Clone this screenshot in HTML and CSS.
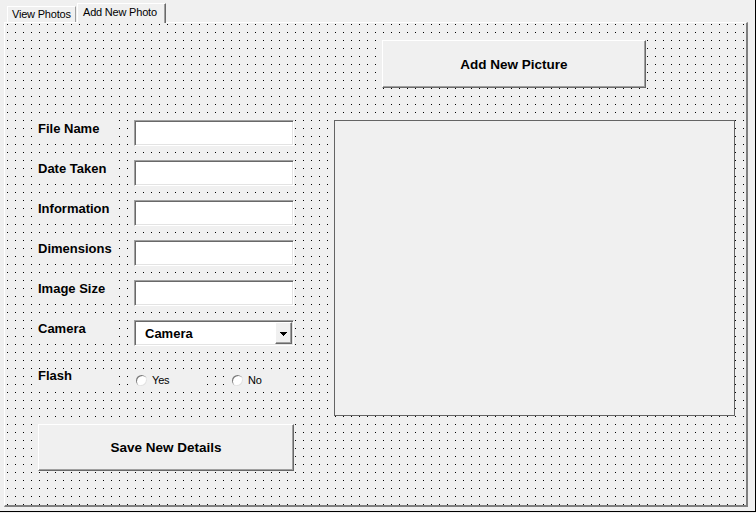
FILE: index.html
```html
<!DOCTYPE html>
<html>
<head>
<meta charset="utf-8">
<link rel="stylesheet" href="styles.css">
</head>
<body>
<div class="window">
  <div class="tabs">
    <div class="tab">View Photos</div>
    <div class="tab tab-active">Add New Photo</div>
  </div>
  <div class="page">
    <div class="top-row">
      <button class="btn btn-add">Add New Picture</button>
    </div>
    <div class="main">
      <div class="fields">
        <div class="row"><span class="label">File Name</span><span class="textbox"></span></div>
        <div class="row"><span class="label">Date Taken</span><span class="textbox"></span></div>
        <div class="row"><span class="label">Information</span><span class="textbox"></span></div>
        <div class="row"><span class="label">Dimensions</span><span class="textbox"></span></div>
        <div class="row"><span class="label">Image Size</span><span class="textbox"></span></div>
        <div class="row">
          <span class="label">Camera</span>
          <div class="combo">
            <span class="combo-text">Camera</span>
            <span class="combo-btn"><svg width="7" height="4" viewBox="0 0 7 4"><path d="M0 0h7v1H0z M1 1h5v1H1z M2 2h3v1H2z M3 3h1v1H3z" fill="#000"/></svg></span>
          </div>
        </div>
        <div class="row row-flash">
          <span class="label label-flash">Flash</span>
          <label class="option opt-yes"><span class="radio"></span>Yes</label>
          <label class="option opt-no"><span class="radio"></span>No</label>
        </div>
        <button class="btn btn-save">Save New Details</button>
      </div>
      <div class="image-frame"></div>
    </div>
  </div>
</div>
</body>
</html>
```
FILE: styles.css
```css
* { box-sizing: border-box; }
html, body { margin: 0; padding: 0; background: #f0f0f0; }
body {
  width: 756px;
  height: 513px;
  overflow: hidden;
  font-family: "Liberation Sans", Arial, sans-serif;
  color: #000;
}
.window {
  width: 756px;
  height: 512px;
  border-right: 1px solid #000;
  border-bottom: 1px solid #000;
}
.tabs {
  display: flex;
  align-items: flex-end;
  height: 22px;
  padding-left: 7px;
}
.tab {
  height: 16px;
  width: 69px;
  padding: 1px 0 0 4px;
  border-left: 1px solid #fff;
  border-top: 1px solid #fff;
  border-right: 1px solid #a0a0a0;
  font-size: 11px;
  line-height: 13px;
  letter-spacing: -0.2px;
  white-space: nowrap;
  background: #f0f0f0;
}
.tab-active {
  position: relative;
  z-index: 1;
  height: 20px;
  width: 89px;
  margin-left: 1px;
  margin-bottom: -1px;
  padding: 2px 0 0 5px;
  border-right: 1px solid #696969;
  box-shadow: inset -1px 0 0 #a0a0a0;
}
.page {
  margin-left: 4px;
  width: 744px;
  height: 485px;
  border-left: 1px solid #fff;
  border-top: 1px solid #fff;
  border-right: 2px solid #808080;
  border-bottom: 2px solid #808080;
  background-color: #f0f0f0;
  background-image: url("data:image/svg+xml,%3Csvg xmlns='http://www.w3.org/2000/svg' width='8' height='8' shape-rendering='crispEdges'%3E%3Crect width='1' height='1' fill='%23000'/%3E%3C/svg%3E");
  background-size: 8px 8px;
  background-position: 2px 1px;
}
.top-row {
  display: flex;
  padding: 17px 0 0 377px;
}
.btn {
  display: block;
  margin: 0;
  padding: 0;
  background: #f0f0f0;
  border-top: 1px solid #fff;
  border-left: 1px solid #fff;
  border-right: 1px solid #696969;
  border-bottom: 1px solid #696969;
  box-shadow: inset -1px -1px 0 #a0a0a0;
  font-family: "Liberation Sans", Arial, sans-serif;
  font-weight: bold;
  font-size: 13.5px;
  color: #000;
}
.btn-add { width: 264px; height: 48px; }
.main {
  display: flex;
  margin-top: 32px;
}
.fields {
  width: 289px;
  display: flex;
  flex-direction: column;
  gap: 14px;
}
.row {
  display: flex;
  height: 26px;
}
.label {
  margin-left: 31px;
  width: 80px;
  height: 24px;
  padding-left: 2px;
  padding-top: 1px;
  font-weight: bold;
  font-size: 13px;
  line-height: 15px;
  white-space: nowrap;
  background: #f0f0f0;
}
.textbox, .combo {
  margin-left: 18px;
  width: 160px;
  height: 26px;
  background: #fff;
  border-top: 1px solid #a0a0a0;
  border-left: 1px solid #a0a0a0;
  border-right: 1px solid #fff;
  border-bottom: 1px solid #fff;
  box-shadow: inset 1px 1px 0 #696969, inset -1px -1px 0 #e3e3e3;
}
.combo {
  display: flex;
  align-items: center;
  padding: 1px;
}
.combo-text {
  flex: 1;
  padding-left: 9px;
  font-weight: bold;
  font-size: 13px;
  line-height: 15px;
}
.combo-btn {
  width: 17px;
  height: 22px;
  display: flex;
  align-items: center;
  justify-content: center;
  background: #f0f0f0;
  border-top: 1px solid #fff;
  border-left: 1px solid #fff;
  border-right: 1px solid #696969;
  border-bottom: 1px solid #696969;
  box-shadow: inset -1px -1px 0 #a0a0a0;
  padding-top: 1px;
}
.combo-btn svg { display: block; }
.row-flash { margin-top: 6px; }
.label-flash {
  margin-top: 3px;
  height: 21px;
  padding-top: 0;
  line-height: 13px;
}
.option {
  display: flex;
  align-items: center;
  gap: 5px;
  height: 20px;
  margin-top: 4px;
  font-size: 11px;
  line-height: 13px;
  letter-spacing: -0.2px;
  background: #f0f0f0;
}
.opt-yes { margin-left: 18px; width: 72px; padding-left: 2px; }
.opt-no { margin-left: 22px; width: 66px; padding-left: 4px; }
.radio {
  width: 11px;
  height: 11px;
  border-radius: 50%;
  background: #fff;
  box-shadow: inset 1px 1px 0 #7a7a7a, inset -1px -1px 0 #e3e3e3;
}
.btn-save {
  margin-top: 18px;
  margin-left: 33px;
  width: 256px;
  height: 47px;
}
.image-frame {
  margin-left: 40px;
  width: 401px;
  height: 296px;
  border: 1px solid #646464;
  background: #f0f0f0;
}
```
